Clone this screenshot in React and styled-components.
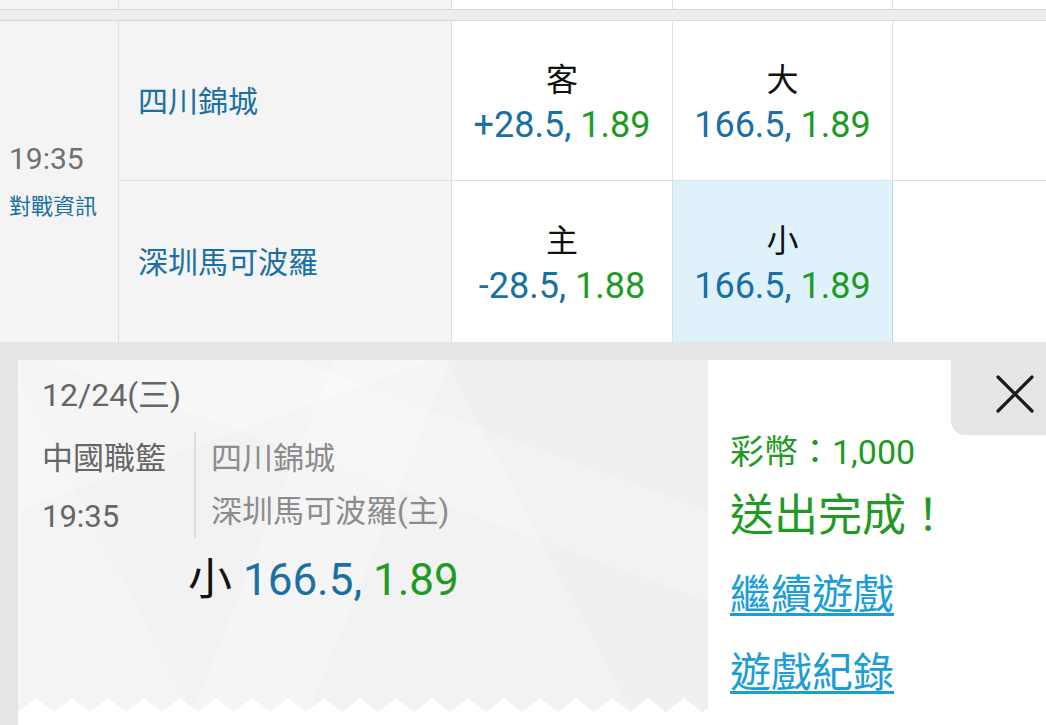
import React from 'react'
import styled, { createGlobalStyle } from 'styled-components'

const GlobalStyle = createGlobalStyle`
  html, body {
    margin: 0;
    padding: 0;
    background: #fff;
  }
  body {
    font-family: Roboto, "Noto Sans CJK TC", sans-serif;
    overflow: hidden;
  }
`;

const BLUE = '#1a70a3';
const GREEN = '#1f9a24';
const COLS = '119px 333px 221px 220px 1fr';

const Page = styled.div`
  width: 1046px;
  height: 725px;
  display: flex;
  flex-direction: column;
  overflow: hidden;
`;

const PrevRow = styled.div`
  display: grid;
  grid-template-columns: ${COLS};
  height: 9px;
`;

const Cell = styled.div`
  box-sizing: border-box;
  background: ${p => (p.$shade ? '#f4f4f4' : p.$picked ? '#dff2fc' : '#fff')};
  border-right: ${p => (p.$last ? 'none' : `1px solid ${p.$picked ? '#bcd6e6' : '#dde0e3'}`)};
  border-bottom: ${p => (p.$top ? '1px solid #dde0e3' : 'none')};
`;

const Separator = styled.div`
  height: 10px;
  background: #eceeef;
  border-top: 1px solid #d5d8da;
  border-bottom: 1px solid #d5d8da;
`;

const MatchRow = styled.div`
  display: grid;
  grid-template-columns: ${COLS};
  grid-template-rows: 160px 161px;
`;

const TimeCell = styled(Cell)`
  grid-row: 1 / span 2;
  display: flex;
  flex-direction: column;
  justify-content: center;
  padding-left: 9px;
  padding-bottom: 3px;
`;

const Time = styled.div`
  font-size: 30px;
  line-height: 40px;
  color: #707070;
`;

const InfoLink = styled.div`
  font-size: 22px;
  line-height: 30px;
  color: ${BLUE};
  margin-top: 13px;
`;

const TeamCell = styled(Cell)`
  display: flex;
  align-items: center;
  padding-left: 19px;
  padding-bottom: 3px;
  font-size: 30px;
  color: ${BLUE};
`;

const OddsCell = styled(Cell)`
  display: flex;
  flex-direction: column;
  align-items: center;
  justify-content: center;
  padding-top: 6px;
`;

const Side = styled.div`
  font-size: 32px;
  line-height: 40px;
  color: #111;
`;

const Odds = styled.div`
  font-size: 36px;
  line-height: 46px;
  margin-top: 2px;
  white-space: nowrap;
`;

const Num = styled.span`
  color: ${p => p.$c};
`;

const Panel = styled.div`
  flex: 1;
  position: relative;
  background: #e5e5e5;
  padding: 18px 0 0 18px;
  display: flex;
`;

const Sheet = styled.div`
  flex: 1;
  display: flex;
  align-items: flex-start;
  background: #fff;
`;

const Ticket = styled.div`
  position: relative;
  box-sizing: border-box;
  width: 690px;
  height: 352px;
  padding: 15px 0 0 24px;
  background-color: #f2f2f2;
  background-image:
    linear-gradient(112deg, transparent 0 38%, rgba(255,255,255,0.22) 38% 52%, transparent 52%),
    linear-gradient(62deg, rgba(255,255,255,0.18) 0 20%, transparent 20% 70%, rgba(0,0,0,0.012) 70%),
    linear-gradient(160deg, rgba(255,255,255,0.25) 0 25%, transparent 25%),
    linear-gradient(20deg, transparent 0 60%, rgba(255,255,255,0.2) 60% 75%, transparent 75%);

  &::after {
    content: '';
    position: absolute;
    left: 0;
    right: 0;
    bottom: 0;
    height: 14px;
    background: conic-gradient(from 128deg at 50% 0, #fff 104deg, transparent 0) 0 0 / 36px 14px repeat-x;
  }
`;

const DateLine = styled.div`
  font-size: 32px;
  line-height: 40px;
  color: #666;
`;

const InfoRow = styled.div`
  display: flex;
  margin-top: 17px;
`;

const League = styled.div`
  width: 152px;
  padding-top: 7px;
  font-size: 31px;
  color: #666;
  div {
    height: 58px;
    line-height: 40px;
  }
`;

const Teams = styled.div`
  border-left: 2px solid #dedede;
  padding: 7px 0 0 15px;
  font-size: 31px;
  color: #8c8c8c;
  height: 99px;
  div {
    height: 53px;
    line-height: 40px;
  }
`;

const Pick = styled.div`
  margin: 0 0 0 146px;
  font-size: 44px;
  line-height: 50px;
  color: #111;
  white-space: nowrap;
`;

const Result = styled.div`
  flex: 1;
  display: flex;
  flex-direction: column;
  align-items: flex-start;
  padding: 72px 0 0 22px;
`;

const Coins = styled.div`
  font-size: 34px;
  line-height: 40px;
  color: ${GREEN};
`;

const Done = styled.div`
  font-size: 44px;
  line-height: 50px;
  color: ${GREEN};
  margin-top: 19px;
`;

const ActionLink = styled.a`
  font-size: 41px;
  line-height: 48px;
  color: #1a9dd9;
  text-decoration: underline;
  text-decoration-thickness: 3px;
  text-underline-offset: 4px;
  margin-top: ${p => p.$gap}px;
  cursor: pointer;
`;

const CloseBox = styled.button`
  position: absolute;
  top: 0;
  right: 0;
  width: 95px;
  height: 93px;
  border: none;
  padding: 10px 0 0 33px;
  background: #e5e5e5;
  border-bottom-left-radius: 14px;
  display: flex;
  align-items: center;
  justify-content: center;
  box-sizing: border-box;
`;

const CloseIcon = () => (
  <svg width="38" height="38" viewBox="0 0 38 38">
    <path d="M2 2 L36 36 M36 2 L2 36" stroke="#1a1a1a" strokeWidth="3.2" strokeLinecap="round" fill="none" />
  </svg>
);

const App = () => {
  return (
    <Page>
      <GlobalStyle />
      <PrevRow>
        <Cell $shade />
        <Cell $shade />
        <Cell />
        <Cell />
        <Cell $last />
      </PrevRow>
      <Separator />
      <MatchRow>
        <TimeCell $shade>
          <Time>19:35</Time>
          <InfoLink>對戰資訊</InfoLink>
        </TimeCell>
        <TeamCell $shade $top>四川錦城</TeamCell>
        <OddsCell $top>
          <Side>客</Side>
          <Odds>
            <Num $c={BLUE}>+28.5, </Num>
            <Num $c={GREEN}>1.89</Num>
          </Odds>
        </OddsCell>
        <OddsCell $top>
          <Side>大</Side>
          <Odds>
            <Num $c={BLUE}>166.5, </Num>
            <Num $c={GREEN}>1.89</Num>
          </Odds>
        </OddsCell>
        <Cell $last $top />
        <TeamCell $shade>深圳馬可波羅</TeamCell>
        <OddsCell>
          <Side>主</Side>
          <Odds>
            <Num $c={BLUE}>-28.5, </Num>
            <Num $c={GREEN}>1.88</Num>
          </Odds>
        </OddsCell>
        <OddsCell $picked>
          <Side>小</Side>
          <Odds>
            <Num $c={BLUE}>166.5, </Num>
            <Num $c={GREEN}>1.89</Num>
          </Odds>
        </OddsCell>
        <Cell $last />
      </MatchRow>
      <Panel>
        <Sheet>
          <Ticket>
            <DateLine>12/24(三)</DateLine>
            <InfoRow>
              <League>
                <div>中國職籃</div>
                <div>19:35</div>
              </League>
              <Teams>
                <div>四川錦城</div>
                <div>深圳馬可波羅(主)</div>
              </Teams>
            </InfoRow>
            <Pick>
              小 <Num $c={BLUE}>166.5, </Num>
              <Num $c={GREEN}>1.89</Num>
            </Pick>
          </Ticket>
          <Result>
            <Coins>彩幣：1,000</Coins>
            <Done>送出完成！</Done>
            <ActionLink $gap={30}>繼續遊戲</ActionLink>
            <ActionLink $gap={30}>遊戲紀錄</ActionLink>
          </Result>
        </Sheet>
        <CloseBox aria-label="close">
          <CloseIcon />
        </CloseBox>
      </Panel>
    </Page>
  )
}

export default App
